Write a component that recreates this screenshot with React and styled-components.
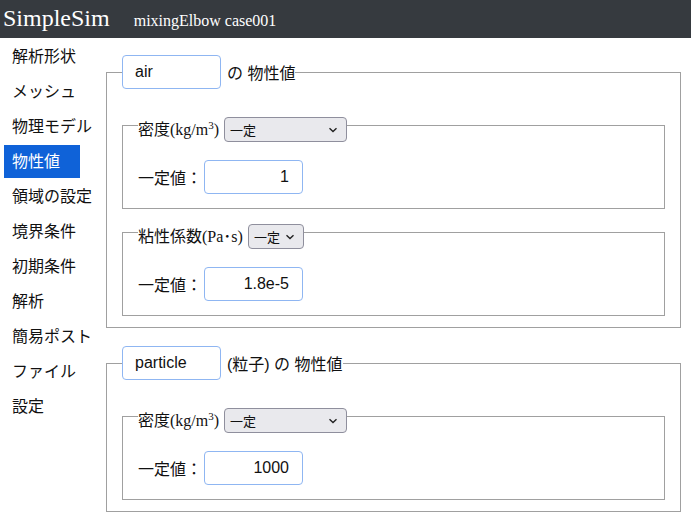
import React, { useState } from "react";
import styled, { createGlobalStyle } from "styled-components";

const GlobalStyle = createGlobalStyle`
  body {
    margin: 0;
    background: #fff;
    font-family: "Liberation Sans", "Noto Sans CJK JP", sans-serif;
    color: #111;
  }
`;

const navItems = [
  "解析形状",
  "メッシュ",
  "物理モデル",
  "物性値",
  "領域の設定",
  "境界条件",
  "初期条件",
  "解析",
  "簡易ポスト",
  "ファイル",
  "設定",
];

export default function App() {
  const [active, setActive] = useState("物性値");

  return (
    <>
      <GlobalStyle />
      <Header>
        <Brand>SimpleSim</Brand>
        <CaseName>mixingElbow case001</CaseName>
      </Header>
      <Body>
        <Sidebar>
          {navItems.map((item) => (
            <NavItem
              key={item}
              $active={item === active}
              onClick={() => setActive(item)}
            >
              {item}
            </NavItem>
          ))}
        </Sidebar>
        <Main>
          <OuterSet>
            <OuterLegend>
              <NameInput defaultValue="air" />
              <LegendText>の 物性値</LegendText>
            </OuterLegend>
            <InnerSet>
              <InnerLegend>
                <span>
                  密度(kg/m<sup>3</sup>)
                </span>
                <Select width={123} />
              </InnerLegend>
              <ValueRow>
                <span>一定値：</span>
                <ValueInput defaultValue="1" />
              </ValueRow>
            </InnerSet>
            <InnerSet>
              <InnerLegend>
                <span>粘性係数(Pa･s)</span>
                <Select width={56} />
              </InnerLegend>
              <ValueRow>
                <span>一定値：</span>
                <ValueInput defaultValue="1.8e-5" />
              </ValueRow>
            </InnerSet>
          </OuterSet>

          <OuterSet>
            <OuterLegend>
              <NameInput defaultValue="particle" />
              <LegendText>(粒子) の 物性値</LegendText>
            </OuterLegend>
            <InnerSet>
              <InnerLegend>
                <span>
                  密度(kg/m<sup>3</sup>)
                </span>
                <Select width={123} />
              </InnerLegend>
              <ValueRow>
                <span>一定値：</span>
                <ValueInput defaultValue="1000" />
              </ValueRow>
            </InnerSet>
          </OuterSet>
        </Main>
      </Body>
    </>
  );
}

function Select({ width }) {
  return (
    <SelectWrap style={{ width }}>
      <NativeSelect defaultValue="const">
        <option value="const">一定</option>
      </NativeSelect>
      <Chevron width="10" height="6" viewBox="0 0 10 6">
        <path d="M1.5 1.2 L5 4.5 L8.5 1.2" fill="none" stroke="#222" strokeWidth="1.4" />
      </Chevron>
    </SelectWrap>
  );
}

const Header = styled.header`
  height: 38px;
  background: #363a3f;
  display: flex;
  align-items: baseline;
  padding: 4px 0 0 3px;
  box-sizing: border-box;
  font-family: "Liberation Serif", serif;
  color: #fff;
`;

const Brand = styled.div`
  font-size: 24px;
  line-height: 28px;
`;

const CaseName = styled.div`
  font-size: 16px;
  margin-left: 24px;
`;

const Body = styled.div`
  display: flex;
  align-items: flex-start;
`;

//sidebar
const Sidebar = styled.nav`
  width: 106px;
  flex-shrink: 0;
  padding: 2px 0 0 4px;
  box-sizing: border-box;
  display: flex;
  flex-direction: column;
  gap: 2px;
`;

const NavItem = styled.a`
  display: flex;
  align-items: center;
  height: 33px;
  width: 76px;
  padding: 0 0 4px 8px;
  box-sizing: border-box;
  font-family: "Noto Sans CJK JP", sans-serif;
  font-size: 16px;
  white-space: nowrap;
  cursor: pointer;
  color: ${(p) => (p.$active ? "#fff" : "#111")};
  background: ${(p) => (p.$active ? "#0f62d8" : "transparent")};
`;

const Main = styled.main`
  flex: 1;
  padding: 17px 10px 0 0;
  display: flex;
  flex-direction: column;
  gap: 18px;
`;

const OuterSet = styled.fieldset`
  margin: 0;
  padding: 0 15px 11px;
  border: 1px solid #a0a0a0;
  min-width: 0;
`;

const OuterLegend = styled.legend`
  padding: 0;
  display: flex;
  align-items: center;
  font-family: "Liberation Sans", "Noto Sans CJK JP", sans-serif;
  font-size: 16px;
`;

const LegendText = styled.span`
  margin-left: 6px;
`;

const NameInput = styled.input`
  width: 99px;
  height: 34px;
  box-sizing: border-box;
  border: 1px solid #8fb6f2;
  border-radius: 4px;
  padding: 0 12px;
  font-family: "Liberation Sans", sans-serif;
  font-size: 16px;
  color: #111;
  outline: none;
`;

const InnerSet = styled.fieldset`
  margin: 20px 0 0;
  padding: 0 15px 14px;
  border: 1px solid #a0a0a0;
  min-width: 0;

  & + & {
    margin-top: 7px;
  }
`;

const InnerLegend = styled.legend`
  padding: 8px 0 0;
  display: flex;
  align-items: center;
  gap: 5px;
  font-family: "Liberation Serif", "Noto Sans CJK JP", serif;
  font-size: 16px;
  line-height: 20px;

  sup {
    font-size: 11px;
    line-height: 0;
  }
`;

const SelectWrap = styled.div`
  position: relative;
  height: 25px;
`;

const NativeSelect = styled.select`
  appearance: none;
  width: 100%;
  height: 100%;
  box-sizing: border-box;
  background: #e9e9ed;
  border: 1px solid #8f8f9d;
  border-radius: 4px;
  padding: 0 0 0 5px;
  font-family: "Noto Sans CJK JP", sans-serif;
  font-size: 13px;
  color: #111;
  outline: none;
`;

const Chevron = styled.svg`
  position: absolute;
  right: 9px;
  top: 10px;
  pointer-events: none;
`;

const ValueRow = styled.div`
  display: flex;
  align-items: center;
  margin-top: 18px;
  font-family: "Noto Sans CJK JP", sans-serif;
  font-size: 16px;

  span {
    width: 66px;
  }
`;

const ValueInput = styled.input`
  width: 99px;
  height: 34px;
  box-sizing: border-box;
  border: 1px solid #8fb6f2;
  border-radius: 4px;
  padding: 0 13px;
  text-align: right;
  font-family: "Liberation Sans", sans-serif;
  font-size: 16px;
  color: #111;
  outline: none;
`;
